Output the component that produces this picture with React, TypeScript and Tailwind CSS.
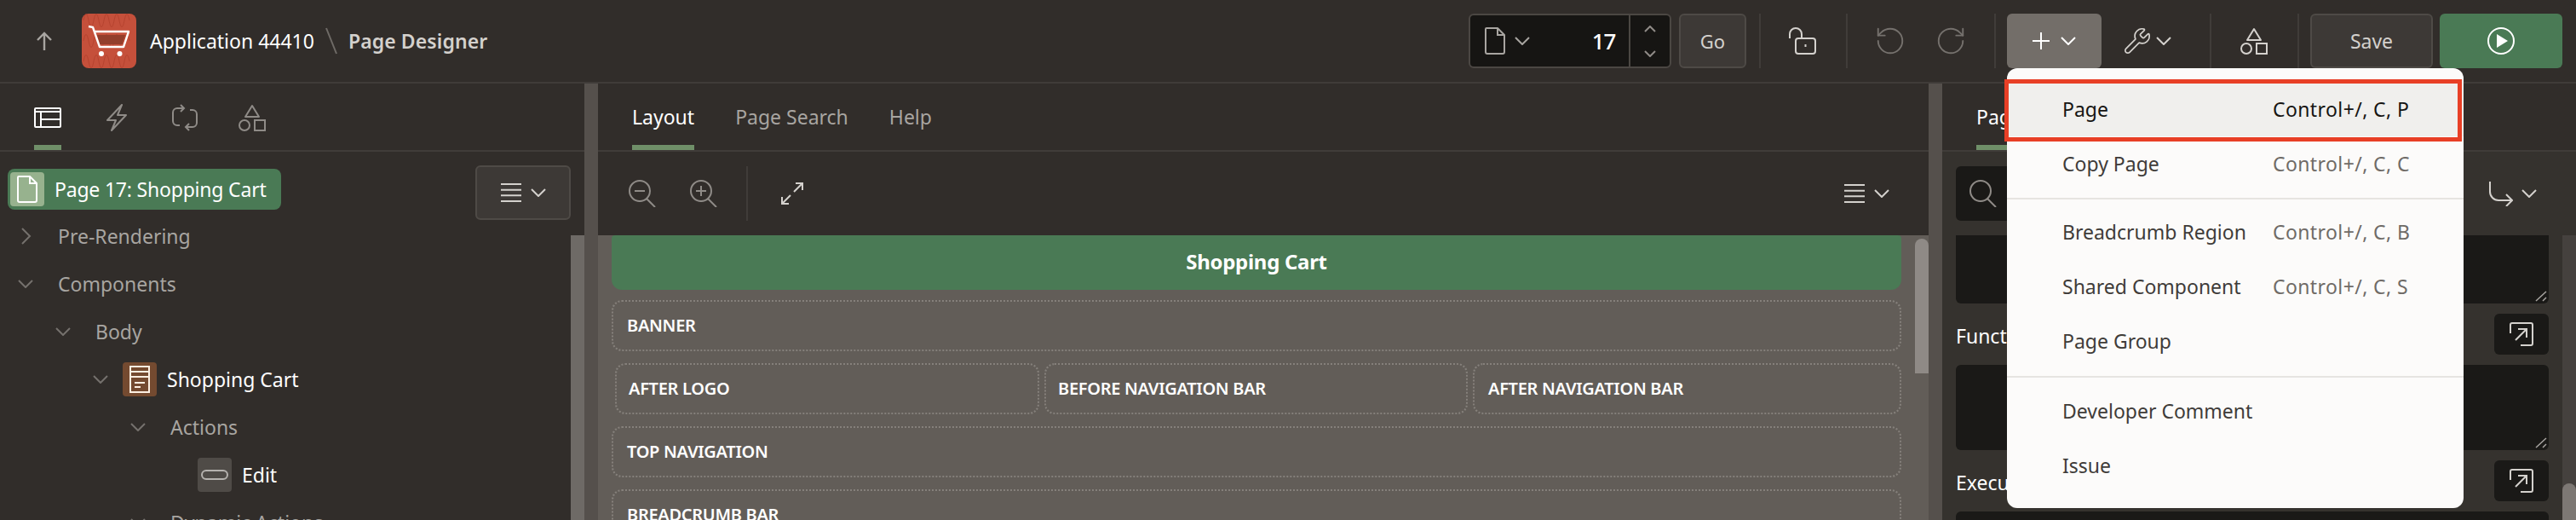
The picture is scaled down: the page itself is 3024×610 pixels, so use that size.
import { RotateCcw, RotateCw, Wrench } from 'lucide-react';

function Chevron({ className = 'text-[#a8a5a1]' }: { className?: string }) {
  return (
    <svg width="18" height="10" viewBox="0 0 18 10" fill="none" stroke="currentColor" strokeWidth="2" className={className}>
      <path d="M1 1l8 8 8-8" />
    </svg>
  );
}

function ChevronUp() {
  return (
    <svg width="14" height="8" viewBox="0 0 14 8" fill="none" stroke="currentColor" strokeWidth="2" className="text-[#8f8b87]">
      <path d="M1 7l6-6 6 6" />
    </svg>
  );
}

function ChevronRight() {
  return (
    <svg width="12" height="20" viewBox="0 0 12 20" fill="none" stroke="currentColor" strokeWidth="2" className="text-[#75716d]">
      <path d="M1 1l9 9-9 9" />
    </svg>
  );
}

function Logo() {
  return (
    <div className="w-16 h-16 rounded-lg bg-[#c5503b] shrink-0">
      <svg width="64" height="64" viewBox="0 0 64 64" fill="none">
        <path
          d="M2 8c2-10 4-10 6 0s4 10 6 0 4-10 6 0 4 10 6 0 4-10 6 0 4 10 6 0 4-10 6 0 4 10 6 0 4-10 6 0 M2 32c2-10 4-10 6 0s4 10 6 0 4-10 6 0 4 10 6 0 4-10 6 0 4 10 6 0 4-10 6 0 4 10 6 0 4-10 6 0 M2 56c2-10 4-10 6 0s4 10 6 0 4-10 6 0 4 10 6 0 4-10 6 0 4 10 6 0 4-10 6 0 4 10 6 0 4-10 6 0"
          stroke="#b5432f"
          strokeWidth="1"
        />
        <path d="M18 25h33l-3.5 11H21z" fill="#933e2c" />
        <path d="M8 15l5 1 8 23h28l6-18H15" stroke="#fff" strokeWidth="2.4" strokeLinejoin="round" />
        <circle cx="23" cy="47" r="3" fill="#fff" />
        <circle cx="44.5" cy="47" r="3" fill="#fff" />
      </svg>
    </div>
  );
}

function Shapes({ className }: { className: string }) {
  return (
    <svg width="32" height="32" viewBox="0 0 32 32" fill="none" stroke="currentColor" strokeWidth="2" className={className}>
      <path d="M16 2l8 13H8z" strokeLinejoin="round" />
      <circle cx="7" cy="25" r="6" />
      <rect x="19" y="19" width="12" height="12" />
    </svg>
  );
}

function PageIcon({ className, width = 24, height = 32 }: { className: string; width?: number; height?: number }) {
  return (
    <svg width={width} height={height} viewBox="0 0 24 32" fill="none" stroke="currentColor" strokeWidth="2" className={className}>
      <path d="M2 1h13l8 8v20a2 2 0 0 1-2 2H3a2 2 0 0 1-2-2V2a1 1 0 0 1 1-1z" strokeLinejoin="round" />
      <path d="M15 1v8h8" />
    </svg>
  );
}

function MenuLines() {
  return (
    <svg width="24" height="22" viewBox="0 0 24 22" stroke="#d4d1cd" strokeWidth="2">
      <path d="M0 1h24M0 7.700h24M0 14.300h24M0 21h24" />
    </svg>
  );
}

function ZoomIcon({ plus, minus }: { plus?: boolean; minus?: boolean }) {
  return (
    <svg width="32" height="32" viewBox="0 0 32 32" fill="none" stroke="#8f8b87" strokeWidth="2">
      <circle cx="13" cy="13" r="12" />
      <path d="M21 22l10 10" />
      {minus && <path d="M7 13h12" />}
      {plus && <path d="M7 13h12M13 7v12" />}
    </svg>
  );
}

function Popout() {
  return (
    <button className="w-16 h-12 rounded-md bg-[#1a1917] flex items-center justify-center shrink-0">
      <svg width="28" height="28" viewBox="0 0 28 28" fill="none" stroke="#d4d1cd" strokeWidth="2">
        <path d="M1 13V3a2 2 0 0 1 2-2h22a2 2 0 0 1 2 2v22a2 2 0 0 1-2 2H13" />
        <path d="M7 21L20 8M10 8h10v10" />
      </svg>
    </button>
  );
}

function Resize() {
  return (
    <svg width="14" height="13" viewBox="0 0 14 13" fill="none" stroke="#a8a5a1" strokeWidth="1.500" className="absolute right-0.5 bottom-0.5">
      <path d="M1 12L13 1M9 12l4-4" />
    </svg>
  );
}

function Divider() {
  return <div className="w-[2px] h-16 bg-[#403c39] shrink-0" />;
}

function TreeRow({ className, children, text = 'text-[#a8a5a1]' }: { className: string; children: React.ReactNode; text?: string }) {
  return <div className={`h-14 flex items-center shrink-0 ${className} ${text}`}>{children}</div>;
}

function Region({ label, className = '' }: { label: string; className?: string }) {
  return (
    <div className={`h-[60px] shrink-0 flex items-center rounded-xl border-2 border-dotted border-[#85807b] text-[20px] font-semibold text-white tracking-[-0.3px] ${className}`}>
      {label}
    </div>
  );
}

function MenuItem({ label, keys, active }: { label: string; keys?: string; active?: boolean }) {
  return (
    <div className={`h-16 flex items-center pl-[65px] ${active ? 'bg-[#f0efed] text-[#161513]' : 'text-[#3f3c39]'}`}>
      <span className="w-[247px]">{label}</span>
      {keys && <span className={`tracking-[0.4px] ${active ? 'text-[#161513]' : 'text-[#6f6b67]'}`}>{keys}</span>}
    </div>
  );
}

export default function App() {
  return (
    <div className="relative w-[3024px] h-[610px] overflow-hidden bg-[#312d2a] text-[23px] flex flex-col font-['Noto_Sans',sans-serif]">
      {/* header */}
      <header className="h-[98px] shrink-0 border-b-2 border-[#403c39] flex items-center">
        <svg width="20" height="22" viewBox="0 0 20 22" fill="none" stroke="#a8a5a1" strokeWidth="2.400" className="ml-[42px] mr-[34px]">
          <path d="M10 22V2M2 10l8-8 8 8" />
        </svg>
        <Logo />
        <span className="ml-4 text-white">Application 44410</span>
        <svg width="14" height="32" viewBox="0 0 14 32" stroke="#6f6b67" strokeWidth="2" className="ml-[13px]">
          <path d="M1 1l12 30" />
        </svg>
        <span className="ml-[13px] font-semibold text-[#d4d1cd] tracking-[0.1px]">Page Designer</span>

        <div className="ml-auto mr-4 flex items-center">
          <div className="w-[238px] h-16 rounded-md border-2 border-[#4b4743] bg-[#161513] flex items-center">
            <div className="w-[188px] h-full flex items-center pl-[17px]">
              <PageIcon className="text-[#a8a5a1]" />
              <Chevron className="ml-[11px] text-[#a8a5a1]" />
              <span className="ml-auto pr-4 text-white font-medium text-[26px] tracking-[-1px]">17</span>
            </div>
            <div className="w-[48px] h-full border-l-2 border-[#4b4743] flex flex-col items-center justify-center gap-[21px]">
              <ChevronUp />
              <div className="rotate-180 flex">
                <ChevronUp />
              </div>
            </div>
          </div>
          <button className="ml-[9px] w-[79px] h-16 rounded-md border-2 border-[#4e4a46] bg-[#3d3936] text-[#d4d1cd] text-[22px]">Go</button>
          <div className="ml-[15px]"><Divider /></div>
          <svg width="32" height="32" viewBox="0 0 32 32" fill="none" stroke="#d4d1cd" strokeWidth="2" className="ml-[33px]">
            <rect x="8" y="13" width="23" height="18" rx="3" />
            <path d="M1 13V8a7 7 0 0 1 14 0v5M19.500 20v3" />
          </svg>
          <div className="ml-[35px]"><Divider /></div>
          <RotateCcw size={38} strokeWidth={1.2} className="ml-[31px] text-[#75716d]" />
          <RotateCw size={38} strokeWidth={1.2} className="ml-[33px] text-[#75716d]" />
          <div className="ml-[32px]"><Divider /></div>
          <button className="ml-[13px] w-[111px] h-16 rounded-md bg-[#736e69] flex items-center justify-center gap-[13px]">
            <svg width="20" height="20" viewBox="0 0 20 20" stroke="#fff" strokeWidth="2">
              <path d="M0 10h20M10 0v20" />
            </svg>
            <Chevron className="text-white" />
          </button>
          <Wrench size={34} strokeWidth={1.2} className="ml-[25px] text-[#d4d1cd]" />
          <Chevron className="ml-[5px] text-[#d4d1cd]" />
          <div className="ml-[45px]"><Divider /></div>
          <Shapes className="ml-[34px] text-[#d4d1cd]" />
          <div className="ml-[35px]"><Divider /></div>
          <button className="ml-[13px] w-[144px] h-16 rounded-md border-2 border-[#4e4a46] bg-[#3d3936] text-[#d4d1cd]">Save</button>
          <button className="ml-2 w-[144px] h-16 rounded-md bg-[#4a7a55] flex items-center justify-center">
            <svg width="32" height="32" viewBox="0 0 32 32" fill="none" stroke="#fff" strokeWidth="2">
              <circle cx="16" cy="16" r="15" />
              <path d="M11 8l13 8-13 8z" fill="#fff" stroke="none" />
            </svg>
          </button>
        </div>
      </header>

      <main className="flex-1 min-h-0 flex">
        {/* left panel */}
        <section className="w-[686px] shrink-0 flex flex-col">
          <div className="h-[80px] shrink-0 border-b-2 border-[#403c39] flex items-center pl-10 relative">
            <div className="w-8 h-full flex items-center border-y-[6px] border-b-[#6f8f68] border-t-transparent">
              <svg width="32" height="24" viewBox="0 0 32 24" fill="none" stroke="#fff" strokeWidth="2" className="mt-[2px]">
                <rect x="1" y="1" width="30" height="22" rx="1" />
                <path d="M1 5h30M8 5v18M8 14h23" />
              </svg>
            </div>
            <svg width="24" height="32" viewBox="0 0 24 32" fill="none" stroke="#8f8b87" strokeWidth="2" strokeLinejoin="round" className="ml-[53px] mt-[2px]">
              <path d="M18 1L1 19h10L6 31l17-18H13z" />
            </svg>
            <svg width="32" height="32" viewBox="0 0 32 32" fill="none" stroke="#8f8b87" strokeWidth="2" className="ml-[52px] mt-[2px]">
              <path d="M15 5H7a5 5 0 0 0-5 5v10a5 5 0 0 0 5 5h3M11 1l4 4-4 4" />
              <path d="M17 27h8a5 5 0 0 0 5-5V12a5 5 0 0 0-5-5h-3M21 23l-4 4 4 4" />
            </svg>
            <Shapes className="ml-[47px] mt-[2px] text-[#8f8b87]" />
          </div>
          <div className="flex-1 min-h-0 flex">
            <div className="w-[670px] shrink-0 overflow-hidden flex flex-col">
              <div className="h-[71px] shrink-0 flex items-start pt-4 pl-[9px]">
                <div className="mt-1 w-[321px] h-12 rounded-lg bg-[#4a7a55] flex items-center pl-[3px] text-white">
                  <div className="w-10 h-10 rounded bg-[#97b28e] flex items-center justify-center">
                    <PageIcon className="text-white" />
                  </div>
                  <span className="ml-3 tracking-[-0.2px]">Page 17: Shopping Cart</span>
                </div>
                <button className="ml-auto w-[112px] h-16 rounded-md border-2 border-[#4e4a46] bg-[#3d3936] flex items-center justify-center gap-[11px]">
                  <MenuLines />
                  <Chevron className="text-[#d4d1cd]" />
                </button>
              </div>
              <TreeRow className="pl-[25px]">
                <ChevronRight />
                <span className="ml-[31px]">Pre-Rendering</span>
              </TreeRow>
              <TreeRow className="pl-5">
                <Chevron className="w-5 text-[#75716d]" />
                <span className="ml-7">Components</span>
              </TreeRow>
              <TreeRow className="pl-16">
                <Chevron className="w-5 text-[#75716d]" />
                <span className="ml-7">Body</span>
              </TreeRow>
              <TreeRow className="pl-[108px]" text="text-white">
                <Chevron className="w-5 text-[#75716d]" />
                <div className="ml-4 w-10 h-10 rounded bg-[#744a30] flex items-center justify-center">
                  <svg width="24" height="32" viewBox="0 0 24 32" fill="none" stroke="#fcefe2" strokeWidth="2">
                    <rect x="1" y="1" width="22" height="30" />
                    <path d="M1 7h22M1 13h22M6 20h12M6 25h7" />
                  </svg>
                </div>
                <span className="ml-3">Shopping Cart</span>
              </TreeRow>
              <TreeRow className="pl-[152px]">
                <Chevron className="w-5 text-[#75716d]" />
                <span className="ml-7">Actions</span>
              </TreeRow>
              <TreeRow className="pl-[232px]" text="text-white">
                <div className="w-10 h-10 rounded bg-[#4f4b47] flex items-center justify-center">
                  <svg width="32" height="12" viewBox="0 0 32 12" fill="none" stroke="#b5b2ae" strokeWidth="2">
                    <rect x="1" y="1" width="30" height="10" rx="5" />
                  </svg>
                </div>
                <span className="ml-3">Edit</span>
              </TreeRow>
              <TreeRow className="pl-[152px]">
                <Chevron className="w-5 text-[#75716d]" />
                <span className="ml-7">Dynamic Actions</span>
              </TreeRow>
            </div>
            <div className="w-4 shrink-0 mt-[98px] bg-[#6e6a66]" />
          </div>
        </section>

        <div className="w-4 shrink-0 bg-[#55504c]" />

        {/* layout panel */}
        <section className="w-[1562px] shrink-0 flex flex-col">
          <div className="h-[80px] shrink-0 border-b-2 border-[#403c39] flex pl-10 gap-12 text-[#a8a5a1]">
            <div className="h-full flex items-center border-y-[6px] border-b-[#6f8f68] border-t-transparent text-white">Layout</div>
            <div className="h-full flex items-center">Page Search</div>
            <div className="h-full flex items-center">Help</div>
          </div>
          <div className="h-[98px] shrink-0 flex items-center pl-9 pr-[46px]">
            <ZoomIcon minus />
            <div className="ml-10"><ZoomIcon plus /></div>
            <div className="ml-[34px] w-[2px] h-16 bg-[#403c39]" />
            <svg width="28" height="28" viewBox="0 0 28 28" fill="none" stroke="#d4d1cd" strokeWidth="2" className="ml-[38px]">
              <path d="M16 12L26 2M18 2h8v8M12 16L2 26M2 18v8h8" />
            </svg>
            <div className="ml-auto flex items-center gap-[11px]">
              <MenuLines />
              <Chevron className="text-[#d4d1cd]" />
            </div>
          </div>
          <div className="flex-1 min-h-0 bg-[#625d58] flex pl-4 gap-4 overflow-hidden">
            <div className="w-[1514px] shrink-0 flex flex-col">
              <div className="h-16 shrink-0 pb-[2px] rounded-b-xl rounded-t-sm bg-[#4a7a55] flex items-center justify-center text-white font-bold text-[24px] tracking-[-0.3px]">Shopping Cart</div>
              <Region label="BANNER" className="mt-3 px-4" />
              <div className="mt-[14px] shrink-0 grid grid-cols-[498px_497px_1fr] gap-[6px] pl-1">
                <Region label="AFTER LOGO" className="px-[14px]" />
                <Region label="BEFORE NAVIGATION BAR" className="px-[14px]" />
                <Region label="AFTER NAVIGATION BAR" className="px-4" />
              </div>
              <Region label="TOP NAVIGATION" className="mt-[14px] px-4" />
              <Region label="BREADCRUMB BAR" className="mt-[14px] px-4" />
            </div>
            <div className="w-4 h-[158px] shrink-0 mt-1 rounded-t-full bg-[#8f8a86]" />
          </div>
        </section>

        <div className="w-4 shrink-0 bg-[#55504c]" />

        {/* property panel */}
        <section className="flex-1 min-w-0 flex flex-col">
          <div className="h-[80px] shrink-0 border-b-2 border-[#403c39] flex pl-10 text-white">
            <div className="w-[100px] h-full flex items-center border-y-[6px] border-b-[#6f8f68] border-t-transparent">Page</div>
          </div>
          <div className="flex-1 min-h-0 flex bg-[#35322e]">
            <div className="w-[696px] ml-4 shrink-0 overflow-hidden flex flex-col">
              <div className="h-[98px] shrink-0 flex items-center">
                <div className="w-[590px] h-16 rounded-md bg-[#1a1917] flex items-center pl-4">
                  <svg width="32" height="32" viewBox="0 0 32 32" fill="none" stroke="#8f8b87" strokeWidth="2">
                    <circle cx="13" cy="13" r="12" />
                    <path d="M21 22l10 10" />
                  </svg>
                </div>
                <div className="ml-auto mr-[14px] flex items-center gap-[10px]">
                  <svg width="28" height="30" viewBox="0 0 28 30" fill="none" stroke="#d4d1cd" strokeWidth="2">
                    <path d="M1 1v12a10 10 0 0 0 10 10h16M20 16l7 7-7 7" />
                  </svg>
                  <Chevron className="text-[#d4d1cd]" />
                </div>
              </div>
              <div className="relative h-20 shrink-0 rounded-b-md bg-[#1a1917]"><Resize /></div>
              <div className="h-[72px] shrink-0 flex items-center justify-between text-white">
                <span className="mt-[5px] w-[60px] overflow-hidden whitespace-nowrap">Function and Global Variable Declaration</span>
                <Popout />
              </div>
              <div className="relative h-[100px] shrink-0 rounded-md bg-[#1a1917]"><Resize /></div>
              <div className="h-[72px] shrink-0 flex items-center justify-between text-white">
                <span className="mt-[5px] w-[60px] overflow-hidden whitespace-nowrap">Execute when Page Loads</span>
                <Popout />
              </div>
              <div className="h-[40px] shrink-0 rounded-t-md bg-[#1a1917]" />
            </div>
            <div className="w-4 ml-4 shrink-0 mt-[98px] bg-[#45413e] flex flex-col justify-end">
              <div className="h-[43px] rounded-t-full bg-[#7d7874]" />
            </div>
          </div>
        </section>
      </main>

      {/* create menu */}
      <div className="absolute left-[2356px] top-20 w-[536px] h-[516px] rounded-xl bg-[#fcfbfa] py-4">
        <MenuItem label="Page" keys="Control+/, C, P" active />
        <MenuItem label="Copy Page" keys="Control+/, C, C" />
        <div className="h-[2px] mt-2 mb-[6px] bg-[#e6e4e1]" />
        <MenuItem label="Breadcrumb Region" keys="Control+/, C, B" />
        <MenuItem label="Shared Component" keys="Control+/, C, S" />
        <MenuItem label="Page Group" />
        <div className="h-[2px] mt-[9px] mb-[7px] bg-[#e6e4e1]" />
        <MenuItem label="Developer Comment" />
        <MenuItem label="Issue" />
        <div className="absolute -left-[3px] top-[13px] w-[537px] h-[73px] border-[5px] border-[#e83f26]" />
      </div>
    </div>
  );
}
